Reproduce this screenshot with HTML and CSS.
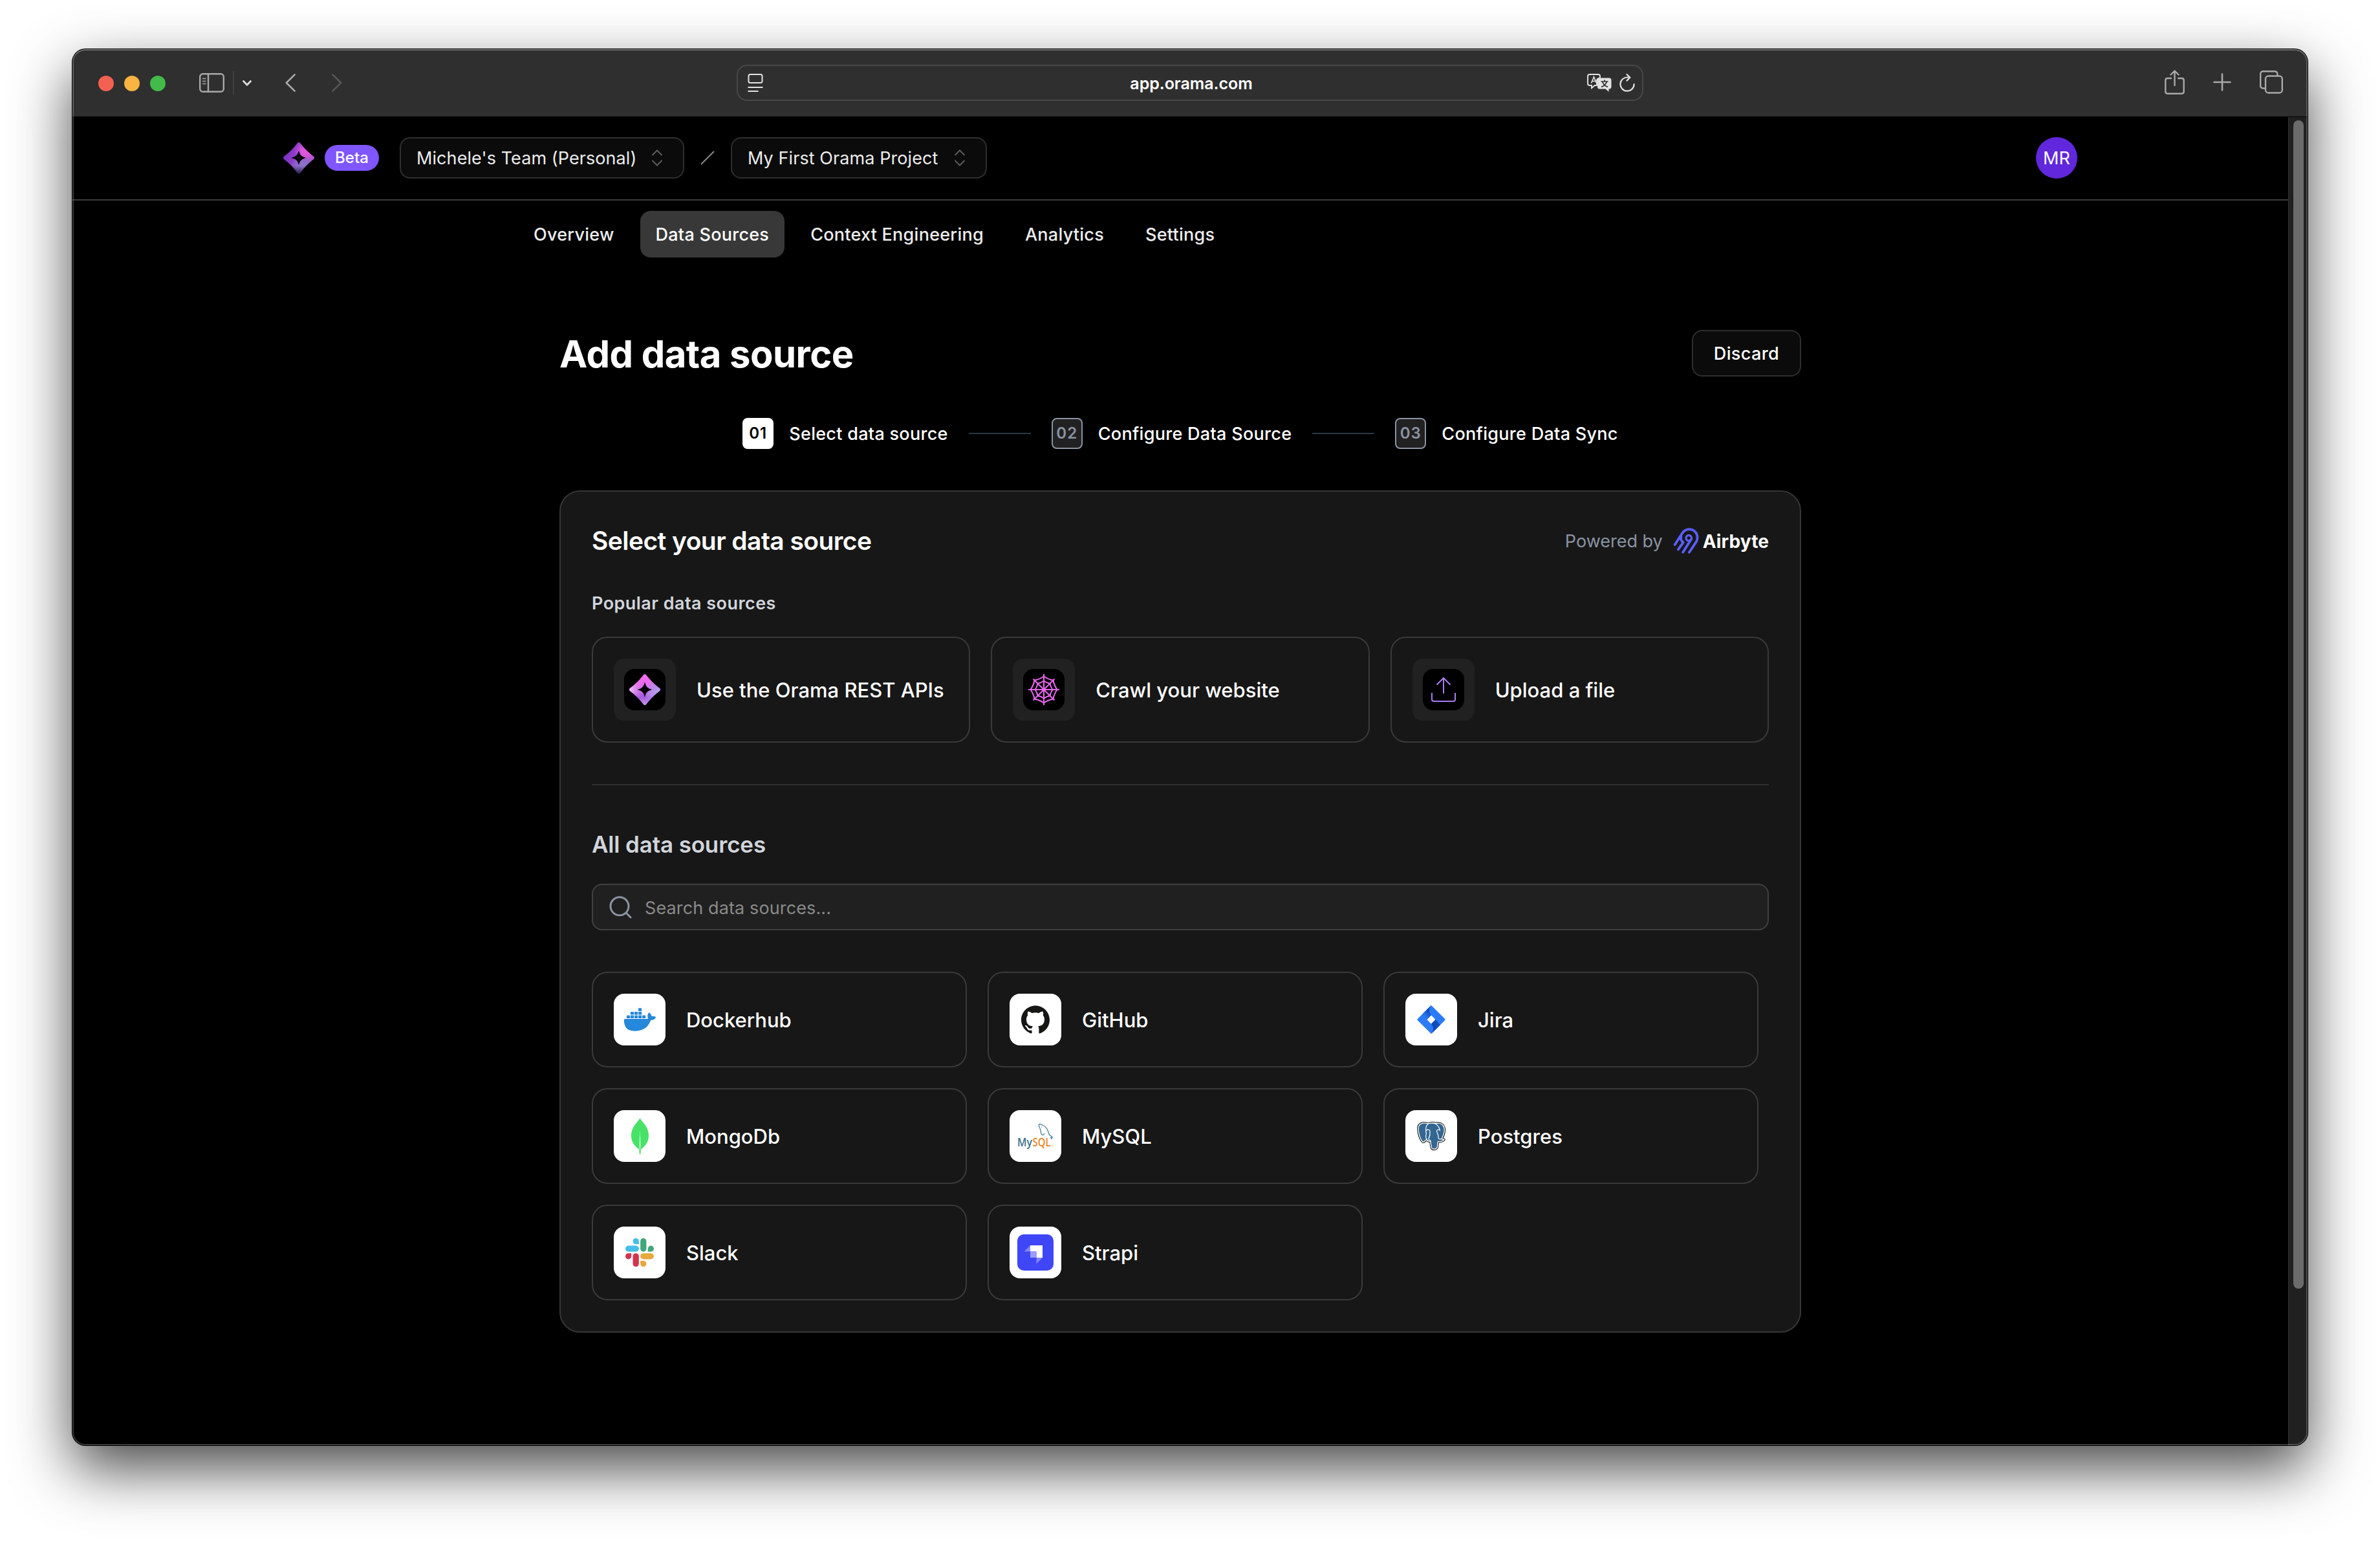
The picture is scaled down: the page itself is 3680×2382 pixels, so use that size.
FILE: index.html
```html
<!DOCTYPE html>
<html lang="en">
<head>
<meta charset="utf-8">
<title>Orama – Add data source</title>
<link rel="stylesheet" href="styles.css">
</head>
<body>
<svg class="defs" width="0" height="0" aria-hidden="true">
  <defs>
    <linearGradient id="dark-base" x1="0" y1="0.3" x2="1" y2="0.6">
      <stop offset="0" stop-color="#7a2fc0"/><stop offset="0.4" stop-color="#8f3fcb"/><stop offset="1" stop-color="#a45ccf"/>
    </linearGradient>
    <radialGradient id="dark-pink" cx="0.72" cy="0.3" r="0.36">
      <stop offset="0" stop-color="#e858e0"/><stop offset="0.45" stop-color="#d553d8"/><stop offset="1" stop-color="#d553d8" stop-opacity="0"/>
    </radialGradient>
    <radialGradient id="dark-lav" cx="0.62" cy="0.82" r="0.4">
      <stop offset="0" stop-color="#8f74cf"/><stop offset="0.5" stop-color="#8a6cc8"/><stop offset="1" stop-color="#8a6cc8" stop-opacity="0"/>
    </radialGradient>
    <linearGradient id="dark-tip" x1="0" y1="0" x2="0" y2="1">
      <stop offset="0.75" stop-color="#1a1030" stop-opacity="0"/><stop offset="1" stop-color="#1a1030" stop-opacity="0.8"/>
    </linearGradient>
    <linearGradient id="light-base" x1="0.5" y1="0" x2="0.5" y2="1">
      <stop offset="0" stop-color="#f56cf2"/><stop offset="0.35" stop-color="#ea68ee"/><stop offset="0.75" stop-color="#a35be0"/><stop offset="1" stop-color="#c69af0"/>
    </linearGradient>
    <radialGradient id="light-left" cx="0.02" cy="0.5" r="0.42">
      <stop offset="0" stop-color="#efc4f7"/><stop offset="1" stop-color="#d08aee" stop-opacity="0"/>
    </radialGradient>
    <radialGradient id="light-right" cx="0.95" cy="0.6" r="0.5">
      <stop offset="0" stop-color="#b9a0f2"/><stop offset="0.5" stop-color="#b48cec" stop-opacity="0.9"/><stop offset="1" stop-color="#b48cec" stop-opacity="0"/>
    </radialGradient>
    <linearGradient id="jira-a" x1="23" y1="12" x2="12" y2="22" gradientUnits="userSpaceOnUse">
      <stop offset="0" stop-color="#1048b4"/><stop offset="0.8" stop-color="#2a7af6"/>
    </linearGradient>
    <linearGradient id="jira-b" x1="27" y1="32" x2="36" y2="30" gradientUnits="userSpaceOnUse">
      <stop offset="0" stop-color="#0f46b4"/><stop offset="1" stop-color="#1450c4"/>
    </linearGradient>
    <path id="orama-mark" fill-rule="evenodd" d="M22 0.900Q24-0.900 26 0.900Q35 13 47.100 22Q48.900 24 47.100 26Q35 35 26 47.100Q24 48.900 22 47.100Q13 35 0.900 26Q-0.900 24 0.900 22Q13 13 22 0.900ZM24 12C22.500 19.500 19.500 22.500 12 24C19.500 25.500 22.500 28.500 24 36C25.500 28.500 28.500 25.500 36 24C28.500 22.500 25.500 19.500 24 12Z"/>
  </defs>
</svg>

<div class="window">
  <div class="titlebar">
    <div class="titlebar-left">
      <div class="lights"><i class="light red"></i><i class="light amber"></i><i class="light green"></i></div>
      <svg class="i-sidebar" viewBox="0 0 39 30"><g fill="none" stroke="#a9a9a9" stroke-width="2.400"><rect x="1.200" y="1.200" width="36.600" height="27.600" rx="4.500"/><path d="M14 1v28"/><path d="M5 8.500h5.500M5 12.500h5.500M5 16.500h5.500" stroke-width="1.700"/></g></svg>
      <i class="separator"></i>
      <svg class="i-caret" viewBox="0 0 14 9"><path d="M1.500 1.500L7 7.200l5.500-5.700" fill="none" stroke="#dcdcdc" stroke-width="2.800" stroke-linecap="round" stroke-linejoin="round"/></svg>
      <svg class="i-back" viewBox="0 0 16 28"><path d="M14.600 1.400L1.800 14l12.800 12.600" fill="none" stroke="#a9a9a9" stroke-width="2.600" stroke-linecap="round" stroke-linejoin="round"/></svg>
      <svg class="i-forward" viewBox="0 0 16 28"><path d="M1.400 1.400L14.200 14 1.400 26.600" fill="none" stroke="#555" stroke-width="2.600" stroke-linecap="round" stroke-linejoin="round"/></svg>
    </div>
    <div class="address">
      <svg class="i-reader" viewBox="0 0 23 28"><g fill="none" stroke="#e2e2e2" stroke-width="2"><rect x="1" y="1" width="21" height="13" rx="2.500"/><path d="M0 21h23M0 27h16"/></g></svg>
      <span class="url">app.orama.com</span>
      <div class="address-tools">
        <svg class="i-translate" viewBox="0 0 38 29"><path d="M4 1h13q3 0 3 3v3h-1q-4 0-4 4v7h-3l-5 4v-4H4q-3 0-3-3V4q0-3 3-3z" fill="none" stroke="#e2e2e2" stroke-width="1.900"/><path d="M6.500 14.500L10.500 5l4 9.500M8 11.500h5" fill="none" stroke="#e2e2e2" stroke-width="1.700"/><path d="M19.500 6.500H34q3.500 0 3.500 3.500v10q0 3.500-3.500 3.500h-.5V28l-5-4.500h-9q-3.500 0-3.500-3.500V10q0-3.500 3.500-3.500z" fill="#e2e2e2"/><path d="M21.500 12h11M27 9.500V12M30.500 12q-2 6-8.500 8.500M23.500 12q2 6 8.500 8.500" fill="none" stroke="#2f2f2f" stroke-width="1.700"/></svg>
        <svg class="i-reload" viewBox="0 0 24 28"><g fill="none" stroke="#e2e2e2" stroke-width="2.200" stroke-linecap="round" stroke-linejoin="round"><path d="M13.500 5.600A10.600 10.600 0 1 0 22.600 16.200"/><path d="M11.500 1l4.800 4.800-4.800 4.800"/></g></svg>
      </div>
    </div>
    <div class="titlebar-right">
      <svg class="i-share" viewBox="0 0 31 38"><g fill="none" stroke="#a9a9a9" stroke-width="2.400" stroke-linecap="round" stroke-linejoin="round"><path d="M10 13H4.500Q1.300 13 1.300 16.200V33.500Q1.300 36.700 4.500 36.700H26.500Q29.700 36.700 29.700 33.500V16.200Q29.700 13 26.500 13H21"/><path d="M15.500 24V1.800M9.500 7.500l6-6 6 6"/></g></svg>
      <svg class="i-plus" viewBox="0 0 28 28"><path d="M14 1.500v25M1.500 14h25" stroke="#a9a9a9" stroke-width="2.600" stroke-linecap="round"/></svg>
      <svg class="i-tabs" viewBox="0 0 36 36"><g fill="none" stroke="#a9a9a9" stroke-width="2.400"><path d="M8.500 27.500H5.500Q1.200 27.500 1.200 23.200V5.500Q1.200 1.200 5.500 1.200H23Q27.300 1.200 27.300 5.500V8"/><rect x="9" y="8.500" width="25.800" height="26" rx="4.300"/></g></svg>
    </div>
  </div>

  <div class="viewport">
    <div class="page">
      <header class="page-header">
        <div class="header-inner">
          <svg class="logo" viewBox="0 0 48 48"><use href="#orama-mark" fill="url(#dark-base)"/><use href="#orama-mark" fill="url(#dark-pink)"/><use href="#orama-mark" fill="url(#dark-lav)"/><use href="#orama-mark" fill="url(#dark-tip)"/></svg>
          <span class="beta">Beta</span>
          <button class="select select-team"><span>Michele's Team (Personal)</span><svg class="i-updown" viewBox="0 0 18 26"><path d="M1.500 9L9 1.500 16.500 9M1.500 17L9 24.500 16.500 17" fill="none" stroke="#5c5c5c" stroke-width="2"/></svg></button>
          <svg class="i-slash" viewBox="0 0 22 22"><path d="M1 21L21 1" stroke="#8a8a8a" stroke-width="2"/></svg>
          <button class="select select-project"><span>My First Orama Project</span><svg class="i-updown" viewBox="0 0 18 26"><path d="M1.500 9L9 1.500 16.500 9M1.500 17L9 24.500 16.500 17" fill="none" stroke="#5c5c5c" stroke-width="2"/></svg></button>
          <span class="avatar">MR</span>
        </div>
      </header>

      <nav class="tabs">
        <a>Overview</a><a class="active">Data Sources</a><a>Context Engineering</a><a>Analytics</a><a>Settings</a>
      </nav>

      <main class="content">
        <div class="heading">
          <h1>Add data source</h1>
          <button class="discard">Discard</button>
        </div>

        <ol class="steps">
          <li class="step current"><b>01</b><span>Select data source</span></li>
          <li class="rail"></li>
          <li class="step"><b>02</b><span>Configure Data Source</span></li>
          <li class="rail"></li>
          <li class="step"><b>03</b><span>Configure Data Sync</span></li>
        </ol>

        <section class="panel">
          <div class="panel-head">
            <h2>Select your data source</h2>
            <div class="powered">
              <span>Powered by</span>
              <svg class="i-airbyte" viewBox="557 197 120 122"><g fill="none" stroke="#5a5fff" stroke-width="11.500" stroke-linecap="round" stroke-linejoin="round"><path d="M564 276L597 225C606 210 618 203.500 632 203.500C654 203.500 670.500 221 670.500 243C670.500 251 668.500 257 665 263L632 312"/><path d="M594 236C590 250 594 259 604 265L580 299"/><circle cx="630" cy="245" r="13" stroke-width="10"/><path d="M641 251L602 312"/></g></svg>
              <strong>Airbyte</strong>
            </div>
          </div>

          <h3 class="popular-title">Popular data sources</h3>
          <div class="popular">
            <div class="card">
              <div class="tile dark"><div class="chip"><svg class="i48" viewBox="0 0 48 48"><use href="#orama-mark" fill="url(#light-base)"/><use href="#orama-mark" fill="url(#light-right)"/><use href="#orama-mark" fill="url(#light-left)"/></svg></div></div>
              <span>Use the Orama REST APIs</span>
            </div>
            <div class="card">
              <div class="tile dark"><div class="chip"><svg class="i48" viewBox="-24 -24 48 48"><g fill="none" stroke="#e766ee" stroke-width="2.100"><path d="M0-24V24M-24 0H24M-16.500-16.500L16.500 16.500M16.500-16.500L-16.500 16.500"/><path d="M0-20.500Q7.500-15.500 14.500-14.500Q15.500-7.500 20.500 0Q15.500 7.500 14.500 14.500Q7.500 15.500 0 20.500Q-7.500 15.500-14.500 14.500Q-15.500 7.500-20.500 0Q-15.500-7.500-14.500-14.500Q-7.500-15.500 0-20.500Z"/><path d="M0-13.500Q5-10 9.500-9.500Q10-5 13.500 0Q10 5 9.500 9.500Q5 10 0 13.500Q-5 10-9.500 9.500Q-10 5-13.500 0Q-10-5-9.500-9.500Q-5-10 0-13.500Z"/></g></svg></div></div>
              <span>Crawl your website</span>
            </div>
            <div class="card">
              <div class="tile dark"><div class="chip"><svg class="i48" viewBox="0 0 48 48"><g fill="none" stroke="#a97ff0" stroke-width="2" stroke-linejoin="round"><path d="M24 30V6M13.500 16.500L24 6l10.500 10.500"/><path d="M6 29v10q0 3 3 3h30q3 0 3-3V29"/></g></svg></div></div>
              <span>Upload a file</span>
            </div>
          </div>

          <hr>

          <h3 class="all-title">All data sources</h3>
          <div class="search">
            <svg class="i-search" viewBox="0 0 35 35"><g fill="none" stroke="#8b93a3" stroke-width="3" stroke-linecap="round"><circle cx="16" cy="15.800" r="14"/><path d="M26.300 26.300L33 33"/></g></svg>
            <span>Search data sources...</span>
          </div>

          <div class="sources">
            <div class="card">
              <div class="tile"><svg class="i50" viewBox="-.4 0 24.400 24" fill="#2488db"><path d="M13.983 11.078h2.119a.186.186 0 00.186-.185V9.006a.186.186 0 00-.186-.186h-2.119a.185.185 0 00-.185.185v1.888c0 .102.083.185.185.185m-2.954-5.430h2.118a.186.186 0 00.186-.186V3.574a.186.186 0 00-.186-.185h-2.118a.185.185 0 00-.185.185v1.888c0 .102.082.185.185.185m0 2.716h2.118a.187.187 0 00.186-.186V6.290a.186.186 0 00-.186-.185h-2.118a.185.185 0 00-.185.185v1.887c0 .102.082.185.185.186m-2.930 0h2.120a.186.186 0 00.184-.186V6.290a.185.185 0 00-.185-.185H8.100a.185.185 0 00-.185.185v1.887c0 .102.083.185.185.186m-2.964 0h2.119a.186.186 0 00.185-.186V6.290a.185.185 0 00-.185-.185H5.136a.186.186 0 00-.186.185v1.887c0 .102.084.185.186.186m5.893 2.715h2.118a.186.186 0 00.186-.185V9.006a.186.186 0 00-.186-.186h-2.118a.185.185 0 00-.185.185v1.888c0 .102.082.185.185.185m-2.930 0h2.120a.185.185 0 00.184-.185V9.006a.185.185 0 00-.184-.186h-2.120a.185.185 0 00-.184.185v1.888c0 .102.083.185.185.185m-2.964 0h2.119a.185.185 0 00.185-.185V9.006a.185.185 0 00-.184-.186h-2.120a.186.186 0 00-.186.186v1.887c0 .102.084.185.186.185m-2.920 0h2.120a.185.185 0 00.184-.185V9.006a.185.185 0 00-.184-.186h-2.120a.185.185 0 00-.184.185v1.888c0 .102.082.185.185.185M23.763 9.890c-.065-.051-.672-.510-1.954-.510-.338.001-.676.030-1.010.087-.248-1.700-1.653-2.530-1.716-2.566l-.344-.199-.226.327c-.284.438-.490.922-.612 1.430-.230.970-.090 1.882.403 2.661-.595.332-1.550.413-1.744.420H.751a.751.751 0 00-.750.748 11.376 11.376 0 00.692 4.062c.545 1.428 1.355 2.480 2.410 3.124 1.180.723 3.100 1.137 5.275 1.137.983.003 1.963-.086 2.930-.266a12.248 12.248 0 003.823-1.389c.980-.567 1.860-1.288 2.610-2.136 1.252-1.418 1.998-2.997 2.553-4.400h.221c1.372 0 2.215-.549 2.680-1.009.309-.293.550-.650.707-1.046l.098-.288Z"/></svg></div>
              <span>Dockerhub</span>
            </div>
            <div class="card">
              <div class="tile"><svg class="i44" viewBox="0 0 24 24" fill="#161614"><path d="M12 .297c-6.630 0-12 5.373-12 12 0 5.303 3.438 9.800 8.205 11.385.600.113.820-.258.820-.577 0-.285-.010-1.040-.015-2.040-3.338.724-4.042-1.610-4.042-1.610C4.422 18.070 3.633 17.700 3.633 17.700c-1.087-.744.084-.729.084-.729 1.205.084 1.838 1.236 1.838 1.236 1.070 1.835 2.809 1.305 3.495.998.108-.776.417-1.305.760-1.605-2.665-.300-5.466-1.332-5.466-5.930 0-1.310.465-2.380 1.235-3.220-.135-.303-.540-1.523.105-3.176 0 0 1.005-.322 3.300 1.230.960-.267 1.980-.399 3-.405 1.020.006 2.040.138 3 .405 2.280-1.552 3.285-1.230 3.285-1.230.645 1.653.240 2.873.120 3.176.765.840 1.230 1.910 1.230 3.220 0 4.610-2.805 5.625-5.475 5.920.420.360.810 1.096.810 2.220 0 1.606-.015 2.896-.015 3.286 0 .315.210.690.825.570C20.565 22.092 24 17.592 24 12.297c0-6.627-5.373-12-12-12"/></svg></div>
              <span>GitHub</span>
            </div>
            <div class="card">
              <div class="tile"><svg class="i48" viewBox="0 0 48 48"><path fill="#2a7bf7" fill-rule="evenodd" d="M24 2L45 22.700Q46.300 24 45 25.300L24 46 3 25.300Q1.700 24 3 22.700ZM24 17.300L17.400 24 24 30.700 30.600 24Z"/><path fill="url(#jira-a)" d="M24 2C20 6.500 20 13 24 17.300L17.400 24 10.200 15.600Z"/><path fill="url(#jira-b)" d="M24 46C28 41.500 28 35 24 30.700L30.600 24 38 32.200Z"/></svg></div>
              <span>Jira</span>
            </div>
            <div class="card">
              <div class="tile"><svg class="i-mongo" viewBox="0 0 27 56"><path fill="#47e266" d="M13.500 0C14.200 2 15.300 3.300 17 5.300C23.500 12.500 27 19.500 27 27.500C27 36.500 22 43.500 15 48.500L14.400 56H12.800L12.200 48.500C5 43.500 0 36.500 0 27.500C0 19.500 3.800 12.500 10 5.300C11.700 3.300 12.800 2 13.500 0Z"/><path fill="#d9f8df" d="M13.500 19L14.500 42 13.800 49.500H13.100L12.600 42Z"/></svg></div>
              <span>MongoDb</span>
            </div>
            <div class="card">
              <div class="tile"><svg class="i-mysql" viewBox="-6 -8.500 68 56"><text x="0" y="35" class="mysql" textLength="23" lengthAdjust="spacingAndGlyphs" fill="#3a728e">My</text><text x="23.500" y="35" class="mysql" textLength="28" lengthAdjust="spacingAndGlyphs" fill="#ee8322">SQL</text><path d="M53 34.600h2" stroke="#f0a868" stroke-width="1"/><path fill="none" stroke="#3a728e" stroke-width="1.200" stroke-linejoin="round" d="M41.500 15.500C41.500 17.500 39 19 37.500 17C36 14.500 36.500 11 35.500 9C34 6 33 3 33.500 1.500C34.500.6 37 1.700 38.500 2.500C42.500 3.800 46 8 47.500 12C48.500 15 48.500 17 50.500 18.500C52 19.800 53.500 20.500 54.500 21.500L51.500 22L54 24.500"/><circle cx="37.800" cy="5.600" r=".7" fill="#3a728e"/></svg></div>
              <span>MySQL</span>
            </div>
            <div class="card">
              <div class="tile"><svg class="i44" viewBox="0 0 44 44"><path fill="#000" stroke="#000" stroke-width="3.400" stroke-linejoin="round" d="M9 2C4 3 1.500 6.500 2 12C2.500 18.500 5 26 8 30.300C9 31.600 10.500 31.500 11.500 30.300L14.500 27.500C16 29.500 18.500 30.500 21 30.200C21.500 35 21.500 38 22.500 40.300C24 43 29 43 31 40C32 37.500 32 33.500 32.500 30.500C36 31 40 30 42 27.500C41 26.500 39.500 27 38 26.500C41 21.500 43 14.500 42 9C41 4.500 36 1.500 31.500 2.200C29 2.500 27 1.700 23 1.700C20.500 1.700 19 2.500 17 3C14.500 2.200 12 1.500 9 2Z"/><path fill="#336791" stroke="#fff" stroke-width="1.400" stroke-linejoin="round" d="M9 2C4 3 1.500 6.500 2 12C2.500 18.500 5 26 8 30.300C9 31.600 10.500 31.500 11.500 30.300L14.500 27.500C16 29.500 18.500 30.500 21 30.200C21.500 35 21.500 38 22.500 40.300C24 43 29 43 31 40C32 37.500 32 33.500 32.500 30.500C36 31 40 30 42 27.500C41 26.500 39.500 27 38 26.500C41 21.500 43 14.500 42 9C41 4.500 36 1.500 31.500 2.200C29 2.500 27 1.700 23 1.700C20.500 1.700 19 2.500 17 3C14.500 2.200 12 1.500 9 2Z"/><path fill="none" stroke="#fff" stroke-width="1.200" stroke-linecap="round" d="M17 3C13 7 13 14 14.500 18C13 22 14 25.500 15 27.500M14.500 13C17 11.500 20 12 20 14.500C20.500 19 19.500 23 18 26.500C19.500 29 21 28.500 21 30M23 1.700C30 2 35 8 35.300 13C33 11.500 30.500 12.500 30.500 14.500C31 18 34 20 33 25.500C34.500 27.500 36.500 27 38 26.500"/></svg></div>
              <span>Postgres</span>
            </div>
            <div class="card">
              <div class="tile"><svg class="i44" viewBox="0 0 24 24"><path fill="#d6324f" d="M5.042 15.165a2.528 2.528 0 0 1-2.520 2.523A2.528 2.528 0 0 1 0 15.165a2.527 2.527 0 0 1 2.522-2.520h2.520v2.520zM6.313 15.165a2.527 2.527 0 0 1 2.521-2.520 2.527 2.527 0 0 1 2.521 2.520v6.313A2.528 2.528 0 0 1 8.834 24a2.528 2.528 0 0 1-2.521-2.522v-6.313z"/><path fill="#47bdea" d="M8.834 5.042a2.528 2.528 0 0 1-2.521-2.520A2.528 2.528 0 0 1 8.834 0a2.528 2.528 0 0 1 2.521 2.522v2.520H8.834zM8.834 6.313a2.528 2.528 0 0 1 2.521 2.521 2.528 2.528 0 0 1-2.521 2.521H2.522A2.528 2.528 0 0 1 0 8.834a2.528 2.528 0 0 1 2.522-2.521h6.312z"/><path fill="#41a77a" d="M18.956 8.834a2.528 2.528 0 0 1 2.522-2.521A2.528 2.528 0 0 1 24 8.834a2.528 2.528 0 0 1-2.522 2.521h-2.522V8.834zM17.688 8.834a2.528 2.528 0 0 1-2.523 2.521 2.527 2.527 0 0 1-2.520-2.521V2.522A2.527 2.527 0 0 1 15.165 0a2.528 2.528 0 0 1 2.523 2.522v6.312z"/><path fill="#e6a93c" d="M15.165 18.956a2.528 2.528 0 0 1 2.523 2.522A2.528 2.528 0 0 1 15.165 24a2.527 2.527 0 0 1-2.520-2.522v-2.522h2.520zM15.165 17.688a2.527 2.527 0 0 1-2.520-2.523 2.526 2.526 0 0 1 2.520-2.520h6.313A2.527 2.527 0 0 1 24 15.165a2.528 2.528 0 0 1-2.522 2.523h-6.313z"/></svg></div>
              <span>Slack</span>
            </div>
            <div class="card">
              <div class="tile"><svg class="i56" viewBox="0 0 56 56"><rect width="56" height="56" rx="10" fill="#3e46f6"/><path fill="#fff" d="M20 17h19v19h-9.500V26.500H20z"/><path fill="#9a9efb" d="M20 26.500h9.500V36H20z"/><path fill="#8287fa" d="M20 17v9.500h-9.500zM29.500 36H39l-9.500 9.500z"/></svg></div>
              <span>Strapi</span>
            </div>
          </div>
        </section>
      </main>
    </div>
    <div class="scrollbar"><div class="thumb"></div></div>
  </div>
</div>
</body>
</html>
```
FILE: styles.css
```css
* { box-sizing: border-box; margin: 0; padding: 0; }

body {
  width: 3680px;
  height: 2382px;
  padding: 76px 112px 148px;
  overflow: hidden;
  background: #fff;
  color: #fff;
  font: 500 27px/40px Inter, "Liberation Sans", sans-serif;
  white-space: nowrap;
}

.defs { position: absolute; }
svg { display: block; flex: none; }
button { font: inherit; color: inherit; }

/* Browser window */
.window {
  position: relative;
  display: flex;
  flex-direction: column;
  width: 3456px;
  height: 2158px;
  border-radius: 20px;
  overflow: hidden;
  background: #000;
  box-shadow: 0 0 0 1px #000, 0 36px 90px rgba(0, 0, 0, .72);
}
.window::after {
  content: "";
  position: absolute;
  inset: 0;
  border: 2px solid rgba(255, 255, 255, .22);
  border-top-color: rgba(255, 255, 255, .32);
  border-radius: 20px;
  pointer-events: none;
}

.titlebar {
  display: grid;
  grid-template-columns: 1fr 1402px 1fr;
  align-items: center;
  flex: none;
  height: 104px;
  padding: 0 38px;
  background: #2f2f2f;
}
.titlebar-left, .titlebar-right, .lights { display: flex; align-items: center; }
.titlebar-left { padding-left: 2px; }
.lights { gap: 16px; padding-top: 2px; }
.light { width: 24px; height: 24px; border-radius: 50%; }
.red { background: #f46152; }
.amber { background: #f9b442; }
.green { background: #43bb4a; }
.i-sidebar { width: 39px; height: 30px; margin-left: 52px; }
.separator { width: 2px; height: 36px; margin-left: 13px; background: #414141; }
.i-caret { width: 14px; height: 9px; margin-left: 13px; }
.i-back { width: 16px; height: 28px; margin-left: 52px; }
.i-forward { width: 16px; height: 28px; margin-left: 56px; }
.titlebar-right { justify-content: flex-end; gap: 44px; padding-bottom: 2px; }
.i-share { width: 31px; height: 38px; }
.i-plus { width: 28px; height: 28px; }
.i-tabs { width: 36px; height: 36px; }

.address {
  display: grid;
  grid-template-columns: 1fr auto 1fr;
  align-items: center;
  height: 56px;
  padding: 0 11px 0 15px;
  border: 2px solid #484848;
  border-radius: 16px;
}
.i-reader { width: 24px; height: 28px; }
.url { padding-top: 2px; font-size: 25px; font-weight: 600; letter-spacing: -.05px; }
.address-tools { display: flex; align-items: center; justify-content: flex-end; gap: 12px; }
.i-translate { width: 38px; height: 29px; }
.i-reload { width: 24px; height: 28px; }

/* Page */
.viewport { display: flex; flex: 1; min-height: 0; }
.page { flex: 1; }
.scrollbar {
  width: 30px;
  margin-top: 1px;
  padding: 5px 6px 0 7px;
  border-left: 1px solid #343434;
  background: #202020;
}
.thumb { width: 16px; height: 1806px; border-radius: 8px; background: #6b6b6b; }

.page-header {
  height: 130px;
  border-bottom: 2px solid #3a3a3a;
}
.header-inner {
  display: flex;
  align-items: center;
  width: 2774px;
  height: 128px;
  margin: 0 auto;
}
.logo { width: 48px; height: 48px; }
.beta {
  height: 40px;
  width: 84px;
  margin: 0 32px 0 16px;
  border-radius: 20px;
  background: #7f56ff;
  font-size: 24px;
  text-align: center;
}
.select {
  display: flex;
  align-items: center;
  justify-content: space-between;
  height: 64px;
  padding: 0 31px 0 24px;
  border: 2px solid #2e2e2e;
  border-radius: 16px;
  background: #0b0b0b;
  color: #ececec;
  font-weight: 400;
  letter-spacing: .08px;
}
.select span { padding-top: 2px; }
.select-team { width: 440px; }
.select-project { width: 396px; }
.i-updown { width: 18px; height: 26px; }
.i-slash { width: 22px; height: 22px; margin: 0 25px; }
.avatar {
  width: 64px;
  height: 64px;
  margin-left: auto;
  border-radius: 50%;
  background: #6027dc;
  font-weight: 400;
  line-height: 66px;
  text-align: center;
}

.tabs {
  display: flex;
  gap: 16px;
  width: 2048px;
  height: 72px;
  margin: 16px auto 0;
}
.tabs a {
  padding: 0 24px;
  border-radius: 16px;
  color: #ededed;
  line-height: 74px;
  letter-spacing: .25px;
}
.tabs .active { background: #383838; color: #fff; }

.content { width: 1920px; margin: 112px auto 0; }
.heading { display: flex; align-items: center; justify-content: space-between; height: 72px; }
h1 { padding-top: 2px; font-size: 58px; font-weight: 700; letter-spacing: -.55px; line-height: 72px; }
.discard {
  width: 169px;
  height: 72px;
  padding-top: 2px;
  border: 2px solid #2e2e2e;
  border-radius: 16px;
  background: #0b0b0b;
  letter-spacing: .4px;
}

.steps {
  display: flex;
  align-items: center;
  justify-content: center;
  gap: 32px;
  height: 48px;
  margin: 64px 0;
  list-style: none;
}
.step { display: flex; align-items: center; gap: 24px; letter-spacing: .29px; }
.step span { padding-top: 2px; }
.step b {
  width: 48px;
  height: 48px;
  border: 2px solid #8b93a3;
  border-radius: 8px;
  background: #212121;
  color: #8b93a3;
  font-size: 24px;
  font-weight: 600;
  line-height: 44px;
  letter-spacing: 1px;
  text-align: center;
}
.step.current b { border-color: #fff; background: #fff; color: #000; }
.rail { width: 96px; height: 2px; background: #2b3746; }

.panel {
  padding: 48px;
  border: 2px solid #363636;
  border-radius: 32px;
  background: #171717;
}
.panel-head { display: flex; align-items: center; justify-content: space-between; height: 56px; }
h2 { font-size: 39px; font-weight: 600; letter-spacing: -.57px; }
.powered { display: flex; align-items: center; color: #8b93a3; font-weight: 400; }
.powered span { padding-top: 2px; }
.i-airbyte { width: 40px; height: 40px; margin: 0 6px 0 16px; }
.powered strong { padding-top: 1px; color: #fff; font-size: 28px; font-weight: 700; letter-spacing: .1px; }

.popular-title {
  margin: 49px 0 31px;
  color: #d1d5db;
  font-size: 27px;
  font-weight: 600;
  letter-spacing: .45px;
}
.popular, .sources { display: grid; grid-template-columns: repeat(3, 1fr); gap: 32px; }
.card {
  display: flex;
  align-items: center;
  gap: 32px;
  padding: 32px;
  border: 2px solid #3a3a3a;
  border-radius: 24px;
  font-size: 31px;
}
.card > span { padding-top: 2px; }
.tile {
  display: flex;
  align-items: center;
  justify-content: center;
  flex: none;
  width: 80px;
  height: 80px;
  border-radius: 16px;
  background: #fff;
}
.tile.dark { width: 96px; height: 96px; background: #212121; }
.chip {
  display: flex;
  align-items: center;
  justify-content: center;
  width: 64px;
  height: 64px;
  border-radius: 16px;
  background: #000;
}
.i44 { width: 44px; height: 44px; }
.i48 { width: 48px; height: 48px; }
.i50 { width: 50px; height: 50px; }
.i56 { width: 56px; height: 56px; }
.i-mongo { width: 27px; height: 56px; }
.i-mysql { width: 68px; height: 56px; }
.mysql { font: 600 18px "Open Sans", sans-serif; }

hr { height: 2px; margin: 64px 0; border: 0; background: #303030; }

.all-title {
  margin: -1px 0 33px;
  color: #d1d5db;
  font-size: 35px;
  font-weight: 600;
  line-height: 56px;
  letter-spacing: -.15px;
}
.search {
  display: flex;
  align-items: center;
  gap: 20px;
  height: 72px;
  padding-left: 25px;
  border: 2px solid #404040;
  border-radius: 16px;
  background: #202020;
  color: #8a8a8a;
  font-weight: 400;
  letter-spacing: .12px;
}
.search span { padding-top: 3px; }
.i-search { width: 35px; height: 35px; }
.sources { margin: 64px 16px 0 0; }
```
